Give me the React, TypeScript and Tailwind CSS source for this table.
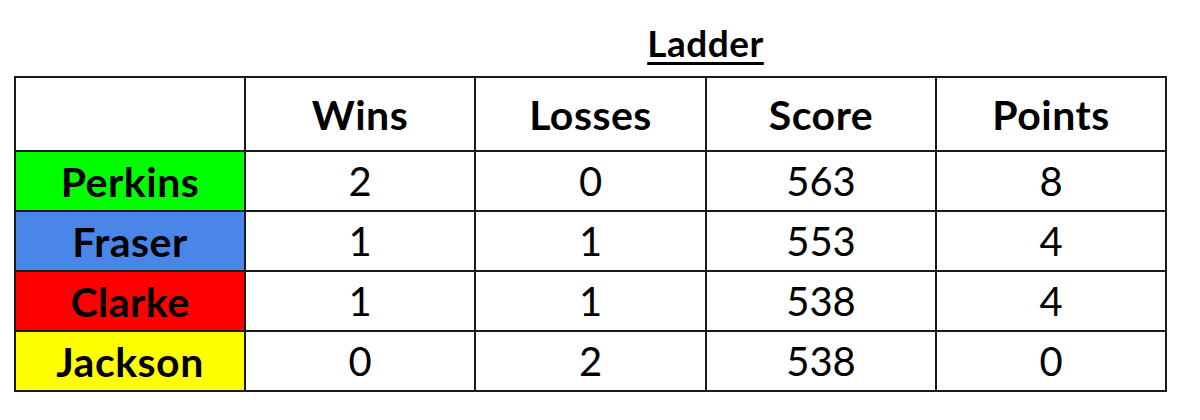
const rows = [
  { name: "Perkins", bg: "bg-[#00ff00]", wins: 2, losses: 0, score: 563, points: 8 },
  { name: "Fraser", bg: "bg-[#4a86e8]", wins: 1, losses: 1, score: 553, points: 4 },
  { name: "Clarke", bg: "bg-[#ff0000]", wins: 1, losses: 1, score: 538, points: 4 },
  { name: "Jackson", bg: "bg-[#ffff00]", wins: 0, losses: 2, score: 538, points: 0 },
];

export default function App() {
  return (
    <div className="w-[1200px] h-[420px] bg-white text-black" style={{ fontFamily: "Lato, 'Noto Sans', sans-serif" }}>
      <div className="h-[76px] pl-[246px] w-[1165px] pt-[24px] text-center">
        <span className="text-[37px] leading-[37px] font-bold underline decoration-[3px] underline-offset-[5px] tracking-[0.5px]">
          Ladder
        </span>
      </div>
      <div className="ml-[14px] w-fit bg-[#1a1a1a] p-[2px] grid grid-cols-[228px_228px_229px_228px_228px] grid-rows-[72px_58px_58px_58px_58px] gap-[2px]">
        <div className="bg-white" />
        {["Wins", "Losses", "Score", "Points"].map((h) => (
          <div key={h} className="bg-white flex items-center justify-center text-[41px] leading-none font-bold tracking-[0.5px]">
            {h}
          </div>
        ))}
        {rows.map((r) => (
          <>
            <div key={r.name} className={`${r.bg} flex items-center justify-center text-[41px] leading-none font-bold tracking-[0.5px]`}>
              {r.name}
            </div>
            {[r.wins, r.losses, r.score, r.points].map((v, i) => (
              <div key={r.name + i} className="bg-white flex items-center justify-center text-[40px] leading-none">
                {v}
              </div>
            ))}
          </>
        ))}
      </div>
    </div>
  );
}
